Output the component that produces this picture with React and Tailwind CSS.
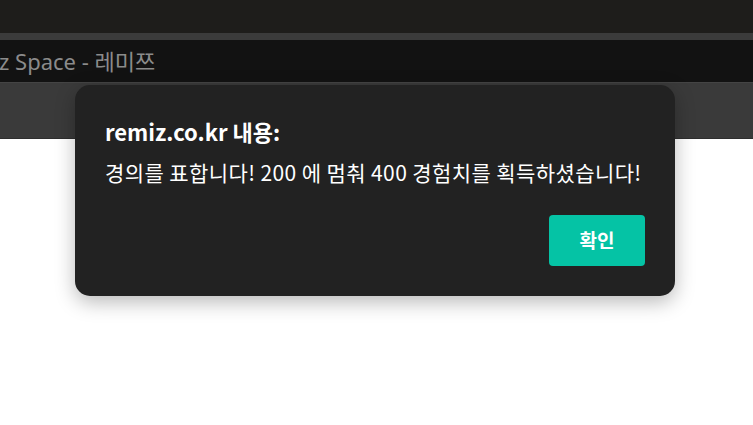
import React from "react";

export default function App() {
  return (
    <div className="relative w-[753px] h-[425px] overflow-hidden bg-white font-['Noto_Sans','Noto_Sans_CJK_KR',sans-serif]">
      {/* 브라우저 상단 */}
      <div className="h-[33px] bg-[#1e1d1b]" />
      <div className="h-[7px] bg-[#3b3b3b]" />
      <div className="h-[42px] bg-[#121212] flex items-center">
        <span className="-ml-[1px] text-[22px] text-[#8b8b8b] leading-none">z Space - 레미쯔</span>
      </div>
      <div className="h-[57px] bg-[#3a3a3a] border-t border-[#444] border-b border-b-[#2e2e2e]" />

      {/* 알림 대화상자 */}
      <div className="absolute left-[75px] top-[85px] w-[600px] h-[211px] rounded-[15px] bg-[#222222] shadow-[0_6px_20px_rgba(0,0,0,0.28)] px-[30px] pt-[35px] font-['Noto_Sans_CJK_KR',sans-serif] text-white">
        <h1 className="text-[22px] font-bold leading-none">remiz.co.kr 내용:</h1>
        <p className="mt-[20px] text-[21px] leading-none tracking-[0.4px]">
          경의를 표합니다! 200 에 멈춰 400 경험치를 획득하셨습니다!
        </p>
        <div className="flex justify-end mt-[32px]">
          <button className="w-[96px] h-[51px] rounded-[4px] bg-[#05c3a5] text-[19px] font-bold">
            확인
          </button>
        </div>
      </div>
    </div>
  );
}
